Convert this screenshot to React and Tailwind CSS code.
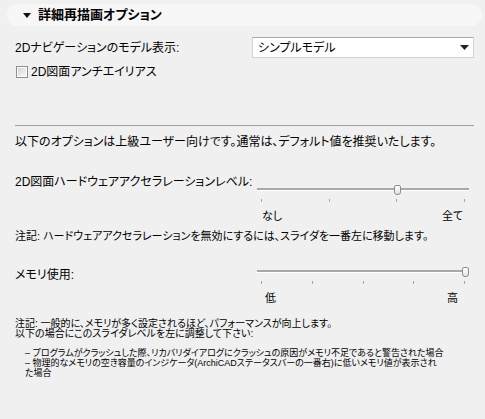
import React from 'react';

const FONT = {
  fontFamily: '"Liberation Sans", "Noto Sans CJK JP", sans-serif',
  fontFeatureSettings: '"palt"',
};

function Slider({ ticks, thumbLeft, left, right, leftPad, rightPad }) {
  return (
    <div className="w-[212px] shrink-0">
      <div className="relative h-[12px]">
        <div className="absolute left-0 right-0 top-[5px] h-[2px] bg-[#a9a9a9]" />
        <div className="absolute left-0 right-0 top-[7px] h-px bg-white" />
        <div
          className={`absolute top-[2px] h-[10px] w-[7px] rounded-b-[3px] rounded-t-[2px] border border-[#8d8d8d] bg-gradient-to-b from-white to-[#e4e4e4] ${thumbLeft}`}
        />
      </div>
      <div className="flex justify-between px-[4px] mt-[4px]">
        {Array.from({ length: ticks }).map((_, i) => (
          <div key={i} className="w-px h-[3px] bg-[#a5a5a5]" />
        ))}
      </div>
      <div className={`flex justify-between mt-[8px] text-[11px] leading-[13px] ${leftPad} ${rightPad}`}>
        <span>{left}</span>
        <span>{right}</span>
      </div>
    </div>
  );
}

export default function App() {
  return (
    <div className="w-[485px] h-[419px] bg-[#f0f0f0] text-black overflow-hidden" style={FONT}>
      {/* Header */}
      <div className="pt-[4px] px-[7px] mr-[-4px]">
        <div className="h-[22px] rounded-full bg-[#f7f7f7] flex items-center pl-[16px]">
          <svg width="8" height="5" viewBox="0 0 8 5" className="mr-[7px] mt-[1px]">
            <path d="M0 0H8L4 5Z" fill="#111" />
          </svg>
          <span className="text-[13px] font-bold leading-[16px]">詳細再描画オプション</span>
        </div>
      </div>

      {/* Navigation model */}
      <div className="flex items-center h-[21px] mt-[11px] pl-[15px] pr-[11px]">
        <span className="flex-1 text-[12px] leading-[14px]">2Dナビゲーションのモデル表示:</span>
        <div className="w-[222px] h-[21px] bg-white border border-[#d4d4d4] border-t-[#a8a8a8] flex items-center pl-[5px] pr-[4px]">
          <span className="flex-1 text-[12px] leading-[14px]">シンプルモデル</span>
          <svg width="9" height="5" viewBox="0 0 9 5">
            <path d="M0 0H9L4.5 5Z" fill="#222" />
          </svg>
        </div>
      </div>

      {/* Checkbox */}
      <div className="flex items-center mt-[8px] pl-[16px] h-[12px]">
        <div className="w-[12px] h-[12px] border border-[#8e8e8e] bg-white p-px">
          <div className="w-full h-full bg-gradient-to-br from-[#d6d6d6] to-[#f8f8f8]" />
        </div>
        <span className="ml-[3px] text-[12px] leading-[14px]">2D図面アンチエイリアス</span>
      </div>

      <div className="mt-[47px] ml-[15px] mr-[11px] h-px bg-[#a0a0a0]" />

      <p className="mt-[9px] pl-[15px] text-[12px] leading-[14px]">
        以下のオプションは上級ユーザー向けです。通常は、デフォルト値を推奨いたします。
      </p>

      {/* HW acceleration */}
      <div className="flex mt-[26px] pl-[15px] pr-[16px]">
        <span className="flex-1 text-[12px] leading-[14px]">2D図面ハードウェアアクセラレーションレベル:</span>
        <div className="mt-[8px]">
          <Slider ticks={4} thumbLeft="left-[137px]" left="なし" right="全て" leftPad="pl-[5px]" rightPad="pr-[6px]" />
        </div>
      </div>

      <p className="mt-[7px] pl-[15px] text-[11px] leading-[13px]">
        注記: ハードウェアアクセラレーションを無効にするには、スライダを一番左に移動します。
      </p>

      {/* Memory */}
      <div className="flex mt-[22px] pl-[15px] pr-[16px]">
        <span className="flex-1 mt-[3px] text-[12px] leading-[14px]">メモリ使用:</span>
        <Slider ticks={5} thumbLeft="left-[205px]" left="低" right="高" leftPad="pl-[8px]" rightPad="pr-[11px]" />
      </div>

      <div className="mt-[14px] pl-[15px] text-[10px] leading-[10px]">
        <p>注記: 一般的に、メモリが多く設定されるほど、パフォーマンスが向上します。</p>
        <p>以下の場合にこのスライダレベルを左に調整して下さい:</p>
      </div>

      <div className="mt-[9px] pl-[25px] text-[9px] leading-[10px] whitespace-nowrap">
        <p>– プログラムがクラッシュした際、リカバリダイアログにクラッシュの原因がメモリ不足であると警告された場合</p>
        <p>
          – 物理的なメモリの空き容量のインジケータ(ArchiCADステータスバーの一番右)に低いメモリ値が表示され
          <br />
          た場合
        </p>
      </div>
    </div>
  );
}
